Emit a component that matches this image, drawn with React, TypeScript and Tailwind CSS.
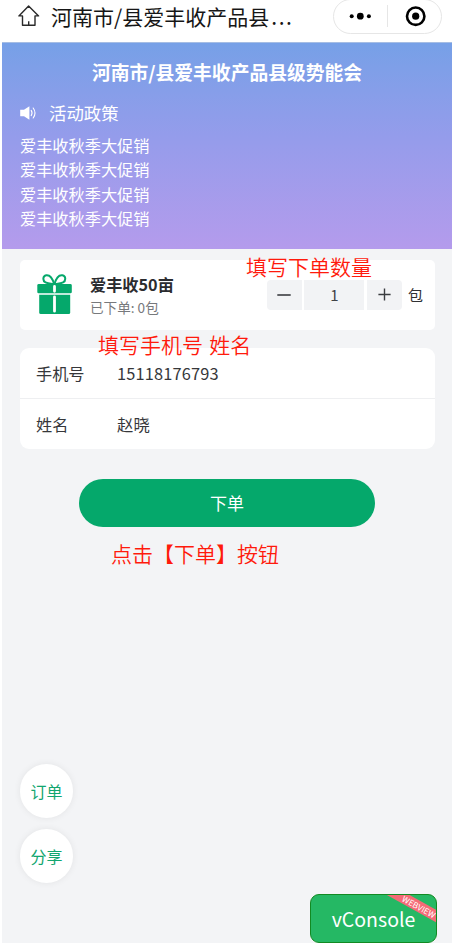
import React from "react";

const policies = ["爱丰收秋季大促销", "爱丰收秋季大促销", "爱丰收秋季大促销", "爱丰收秋季大促销"];

function NavBar() {
  return (
    <div className="h-[42px] bg-white flex items-start">
      <svg className="ml-[16px] mt-[5px] shrink-0" width="22" height="22" viewBox="0 0 22 22" fill="none" stroke="#2a2a2a" strokeWidth="1.4" strokeLinejoin="round">
        <path d="M10.6 1 L0.9 10.9 H4.5 V20.3 H17 V10.9 H20.6 Z" />
        <path d="M10.7 16.2 V20.3" />
      </svg>
      <h1 className="ml-[11px] h-[34px] leading-[32px] text-[21px] text-[#161616] whitespace-nowrap">
        河南市/县爱丰收产品县<span className="ml-[2px] tracking-[1.6px]">...</span>
      </h1>
      <div className="ml-auto mr-[10px] -mt-[1px] w-[109px] h-[35px] shrink-0 rounded-full border border-[#e6e6e6] flex items-center">
        <svg width="107" height="33" viewBox="0 0 107 33">
          <circle cx="17.7" cy="16.2" r="2" fill="#000" />
          <circle cx="26.3" cy="16.2" r="3.4" fill="#000" />
          <circle cx="34.9" cy="16.2" r="2" fill="#000" />
          <path d="M53.5 5 V27" stroke="#e6e6e6" />
          <circle cx="81.7" cy="16.2" r="8.7" fill="none" stroke="#000" strokeWidth="2.6" />
          <circle cx="81.7" cy="16.2" r="3.6" fill="#000" />
        </svg>
      </div>
    </div>
  );
}

function Banner() {
  return (
    <div className="h-[207px] pt-[16px] pl-[18px] border-t border-[#a5bde4] text-white bg-linear-to-b from-[#76a0e7] via-[#949ceb] via-45% to-[#b49bec]">
      <h2 className="h-[26px] leading-[26px] pr-[18px] text-center text-[18.8px] font-bold">河南市/县爱丰收产品县级势能会</h2>
      <div className="mt-[15px] h-[26px] flex items-center">
        <svg width="17" height="14" viewBox="0 0 17 14" fill="none" stroke="#fff" strokeLinecap="round">
          <path d="M0.2 3.8 H4 L9.4 0.2 V13.8 L4 10.2 H0.2 Z" fill="#fff" stroke="none" />
          <path d="M11.2 4.4 Q12.9 7 11.2 9.6" strokeWidth="1.1" />
          <path d="M13.2 2 Q16.8 7 13.2 12" strokeWidth="1.1" />
        </svg>
        <span className="ml-[12px] text-[17.4px]">活动政策</span>
      </div>
      <ul className="mt-[7px] text-[16.2px] leading-[24.3px]">
        {policies.map((text, i) => (
          <li key={i}>{text}</li>
        ))}
      </ul>
    </div>
  );
}

function GiftIcon() {
  return (
    <svg width="35" height="41" viewBox="0 0 35 41" className="shrink-0 -mt-[2px]">
      <g fill="none" stroke="#05a86b" strokeWidth="2">
        <path d="M17.3 10.5 C15.5 4 12.5 0.8 9.2 1.3 C5.5 2 5.6 7 8.5 8.3 C11 9.4 14 9.8 17.3 10.5 Z" />
        <path d="M17.3 10.5 C19.1 4 22.1 0.8 25.4 1.3 C29.1 2 29 7 26.1 8.3 C23.6 9.4 20.6 9.8 17.3 10.5 Z" />
      </g>
      <rect x="0.3" y="10" width="34.5" height="9.3" rx="1.4" fill="#05a86b" />
      <path d="M2.2 20.7 H33.2 V38.5 Q33.2 40 31.7 40 H3.7 Q2.2 40 2.2 38.5 Z" fill="#05a86b" />
      <path d="M17.5 12.5 V17.3 M17.5 22.8 V37.2" stroke="#fff" strokeWidth="2.8" strokeLinecap="round" />
    </svg>
  );
}

function Stepper() {
  return (
    <div className="flex items-center gap-[2.5px] -mt-[1px]">
      <button className="w-[35px] h-[30px] bg-[#f2f3f5] rounded-l-[4px] flex items-center justify-center">
        <svg width="14" height="14" viewBox="0 0 14 14" stroke="#3a3c40" strokeWidth="1.6">
          <path d="M0.3 7 H13.7" />
        </svg>
      </button>
      <div className="w-[60px] h-[30px] bg-[#f2f3f5] text-[15px] leading-[30px] text-center text-[#404246]">1</div>
      <button className="w-[35px] h-[30px] bg-[#f2f3f5] rounded-r-[4px] flex items-center justify-center">
        <svg width="13" height="13" viewBox="0 0 13 13" stroke="#3a3c40" strokeWidth="1.4">
          <path d="M0.4 6.5 H12.6 M6.5 0.4 V12.6" />
        </svg>
      </button>
    </div>
  );
}

function Field({ label, value }: { label: string; value: string }) {
  return (
    <div className="h-[50px] flex items-center px-4 text-[16.2px] text-[#36373a]">
      <span className="w-[81px]">{label}</span>
      <span className="text-[16.4px] tracking-[0.15px]">{value}</span>
    </div>
  );
}

function Note({ className, children }: { className: string; children: React.ReactNode }) {
  return <p className={"absolute text-[21px] leading-[26px] font-[350] text-[#ff1a0c] whitespace-nowrap " + className}>{children}</p>;
}

export default function App() {
  return (
    <div className="w-[454px] h-[944px] px-[2px] bg-white overflow-hidden font-['Noto_Sans_CJK_SC',sans-serif]">
      <NavBar />
      <div className="h-[901px] bg-[#f3f4f6] flex flex-col">
        <Banner />
        <div className="relative px-[18px] pr-[17px] pt-[11px]">
          <div className="h-[70px] bg-white rounded-[5px] pl-[17px] flex items-center">
            <GiftIcon />
            <div className="ml-[18px] flex-1">
              <div className="text-[16.2px] leading-[24px] font-bold text-[#2b2c2f]">爱丰收50亩</div>
              <div className="text-[13.6px] leading-[22px] text-[#77797c]">已下单: 0包</div>
            </div>
            <Stepper />
            <span className="ml-[6px] mr-[12px] text-[15px] text-[#303133]">包</span>
          </div>
          <Note className="left-[244px] top-[4px]">填写下单数量</Note>
          <div className="mt-[18px] bg-white rounded-[9px]">
            <Field label="手机号" value="15118176793" />
            <div className="h-px bg-[#eeeff1]" />
            <Field label="姓名" value="赵晓" />
          </div>
          <Note className="left-[96px] top-[82px] [word-spacing:1.5px]">填写手机号 姓名</Note>
          <button className="block mt-[30px] ml-[59px] w-[296px] h-[48px] rounded-full bg-[#05a86b] text-white text-[17px]">下单</button>
          <Note className="left-[109px] top-[291px]">点击【下单】按钮</Note>
        </div>
        <div className="mt-auto flex items-end justify-between pl-[18px] pr-[15px]">
          <div className="flex flex-col gap-[11px] mb-[60px] text-[16px] text-[#12a670]">
            <button className="w-[53px] h-[54px] rounded-full bg-white shadow-[0_0_7px_rgba(0,0,0,0.07)]">订单</button>
            <button className="w-[53px] h-[54px] rounded-full bg-white shadow-[0_0_7px_rgba(0,0,0,0.07)]">分享</button>
          </div>
          <button className="relative w-[127px] h-[49px] rounded-[9px] border-[1.5px] border-[#128a22] bg-[#25b864] overflow-hidden text-white text-[19.5px]">
            vConsole
            <span className="absolute -right-[21px] top-[6px] w-[76px] h-[11px] rotate-[29deg] bg-[#f56a76] text-[8.2px] leading-[11px] text-center">WEBVIEW</span>
          </button>
        </div>
      </div>
    </div>
  );
}
